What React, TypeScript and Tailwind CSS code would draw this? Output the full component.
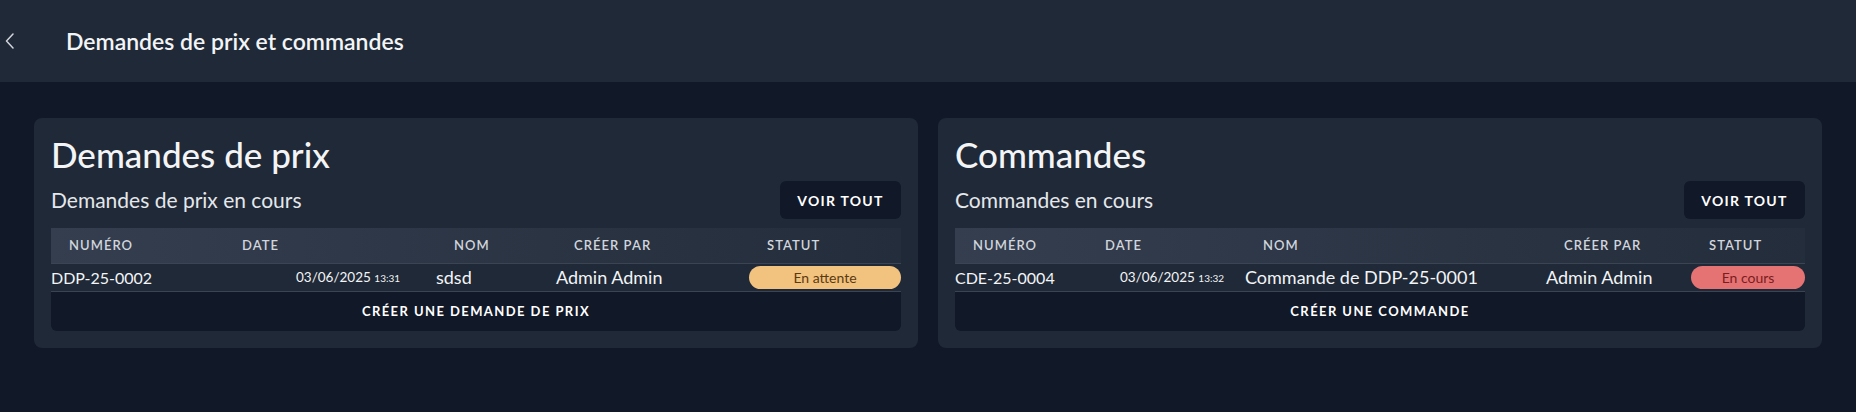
interface Row {
  numero: string;
  date: string;
  time: string;
  nom: string;
  creePar: string;
  statut: string;
  statutClass: string;
}

interface PanelProps {
  title: string;
  subtitle: string;
  cols: string;
  datePad: string;
  row: Row;
  createLabel: string;
}

const headerCell = "pl-[18px] text-[13px] font-semibold tracking-[0.08em] text-gray-300";

function Panel({ title, subtitle, cols, datePad, row, createLabel }: PanelProps) {
  return (
    <div className="flex-1 rounded-lg bg-[#1f2937] px-[17px] pt-4 pb-[17px]">
      <h2 className="text-[35px] leading-[40px] font-medium text-gray-100">{title}</h2>

      {/* Subtitle + voir tout */}
      <div className="mt-[7px] flex items-center justify-between">
        <p className="text-[21px] text-gray-200">{subtitle}</p>
        <button className="h-[38px] w-[121px] rounded-md bg-[#111827] text-[14px] font-bold tracking-[0.09em] text-white">
          VOIR TOUT
        </button>
      </div>

      {/* Table */}
      <div className="mt-[9px]">
        <div className={`grid ${cols} h-9 items-center border-b border-[#3a4453] bg-gradient-to-r from-[#343e4f] to-[#232d3b]`}>
          <span className={headerCell}>NUMÉRO</span>
          <span className={headerCell}>DATE</span>
          <span className={headerCell}>NOM</span>
          <span className={headerCell}>CRÉER PAR</span>
          <span className={headerCell}>STATUT</span>
        </div>
        <div className={`grid ${cols} h-7 items-center border-b border-[#3a4453] text-gray-100`}>
          <span className="text-[16px]">{row.numero}</span>
          <span className={`${datePad} text-[13.5px] whitespace-nowrap`}>
            {row.date} <span className="text-[10px]">{row.time}</span>
          </span>
          <span className="text-[18px] whitespace-nowrap">{row.nom}</span>
          <span className="text-[18px] whitespace-nowrap">{row.creePar}</span>
          <span className={`flex h-[23px] items-center justify-center rounded-full text-[14px] ${row.statutClass}`}>
            {row.statut}
          </span>
        </div>
        <button className="flex h-[39px] w-full items-center justify-center rounded-b-md bg-[#111827] text-[13px] font-bold tracking-[0.11em] text-white">
          {createLabel}
        </button>
      </div>
    </div>
  );
}

export default function App() {
  return (
    <div className="min-h-[412px] bg-[#111827] font-['Lato',sans-serif]">
      {/* Top bar */}
      <header className="flex h-[82px] items-center bg-[#1f2937] pl-[5px]">
        <svg width="9" height="16" viewBox="0 0 9 16" fill="none" className="text-gray-300">
          <path d="M8 1 L1.5 8 L8 15" stroke="currentColor" strokeWidth="1.5" strokeLinecap="round" strokeLinejoin="round" />
        </svg>
        <h1 className="ml-[52px] text-[23px] font-semibold text-gray-100">Demandes de prix et commandes</h1>
      </header>

      <main className="flex gap-5 px-[34px] pt-9">
        <Panel
          title="Demandes de prix"
          subtitle="Demandes de prix en cours"
          cols="grid-cols-[173px_212px_120px_193px_152px]"
          datePad="pl-[72px]"
          createLabel="CRÉER UNE DEMANDE DE PRIX"
          row={{
            numero: "DDP-25-0002",
            date: "03/06/2025",
            time: "13:31",
            nom: "sdsd",
            creePar: "Admin Admin",
            statut: "En attente",
            statutClass: "bg-[#f2c27f] text-[#5a3a12]",
          }}
        />
        <Panel
          title="Commandes"
          subtitle="Commandes en cours"
          cols="grid-cols-[132px_158px_301px_145px_1fr]"
          datePad="pl-[33px]"
          createLabel="CRÉER UNE COMMANDE"
          row={{
            numero: "CDE-25-0004",
            date: "03/06/2025",
            time: "13:32",
            nom: "Commande de DDP-25-0001",
            creePar: "Admin Admin",
            statut: "En cours",
            statutClass: "bg-[#e57373] text-[#7a1d1d]",
          }}
        />
      </main>
    </div>
  );
}
